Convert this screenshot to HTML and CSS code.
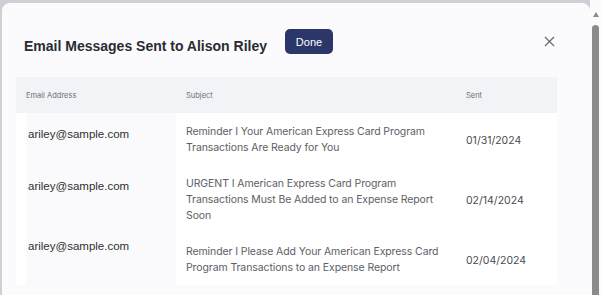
FILE: index.html
```html
<!DOCTYPE html>
<html lang="en">
<head>
  <meta charset="UTF-8">
  <title>Email Messages Sent</title>
  <meta name="viewport" content="width=device-width, initial-scale=1.0">
  <link rel="stylesheet" href="styles.css">
</head>
<body>
  <div class="page">
    <div class="modal">
      <div class="modal-header">
        <h2 class="modal-title">Email Messages Sent to Alison Riley</h2>
        <button class="done-button">Done</button>
        <button class="close-button" aria-label="Close">
          <svg width="11" height="11" viewBox="0 0 11 11">
            <path d="M1 1 L10 10 M10 1 L1 10" stroke="#676b7b" stroke-width="1.3" fill="none"/>
          </svg>
        </button>
      </div>
      <table class="messages">
        <thead>
          <tr>
            <th class="col-email">Email Address</th>
            <th class="col-subject">Subject</th>
            <th class="col-sent">Sent</th>
          </tr>
        </thead>
        <tbody>
          <tr>
            <td class="email">ariley@sample.com</td>
            <td class="subject">Reminder I Your American Express Card Program Transactions Are Ready for You</td>
            <td class="sent">01/31/2024</td>
          </tr>
          <tr>
            <td class="email">ariley@sample.com</td>
            <td class="subject">URGENT I American Express Card Program Transactions Must Be Added to an Expense Report Soon</td>
            <td class="sent">02/14/2024</td>
          </tr>
          <tr>
            <td class="email up">ariley@sample.com</td>
            <td class="subject">Reminder I Please Add Your American Express Card Program Transactions to an Expense Report</td>
            <td class="sent">02/04/2024</td>
          </tr>
        </tbody>
      </table>
    </div>
    <div class="scrollbar">
      <div class="scroll-arrow"></div>
      <div class="scroll-thumb"></div>
    </div>
  </div>
</body>
</html>
```

FILE: styles.css
```css
html, body {
  margin: 0;
  padding: 0;
  height: 100%;
  overflow: hidden;
}
body {
  background-color: #cdd0d6;
  font-family: "Liberation Sans", Arial, sans-serif;
  color: #333;
}
.page {
  display: flex;
  height: 100%;
}
.modal {
  flex: 1;
  margin: 3px 0 0 2px;
  background-color: #fbfbfd;
  border-radius: 8px 8px 0 0;
  padding: 0 32px 0 14px;
  overflow: hidden;
}
.modal-header {
  display: flex;
  align-items: center;
  height: 74px;
  box-sizing: border-box;
  padding: 4px 0 0 8px;
}
.modal-title {
  margin: 7px 0 0 0;
  font-size: 14px;
  font-weight: bold;
  color: #2a2b33;
}
.done-button {
  margin-left: 18px;
  margin-top: -1px;
  width: 48px;
  height: 25px;
  border: none;
  border-radius: 5px;
  background-color: #2b3768;
  color: #fff;
  font-family: "Liberation Sans", Arial, sans-serif;
  font-size: 11px;
  cursor: pointer;
}
.close-button {
  margin-left: auto;
  margin-right: 3px;
  margin-top: -1px;
  background: none;
  border: none;
  padding: 0;
  cursor: pointer;
  display: flex;
}
.messages {
  width: 541px;
  border-collapse: collapse;
  table-layout: fixed;
}
.messages th {
  height: 36px;
  background-color: #f2f3f6;
  font-family: Inter, sans-serif;
  font-size: 7.5px;
  font-weight: normal;
  color: #6d6e78;
  text-align: left;
  padding: 0 0 0 10px;
}
.col-email { width: 150px; }
.col-subject { width: 270px; }
.messages td {
  background-color: #fff;
  padding: 11px 0 9px 10px;
  vertical-align: middle;
}
.messages td.email {
  vertical-align: top;
  font-family: "Liberation Sans", Arial, sans-serif;
  font-size: 11.5px;
  color: #303030;
  line-height: 16px;
  padding-top: 13px;
  padding-left: 12px;
  background: linear-gradient(to right, #fff 10px, #fafafc 10px);
}
.messages td.email.up {
  padding-top: 5px;
}
.messages td.subject {
  font-family: Inter, sans-serif;
  font-size: 10.5px;
  letter-spacing: -0.1px;
  line-height: 16px;
  color: #5e5e66;
}
.messages td.sent {
  font-family: Inter, sans-serif;
  font-size: 10.5px;
  color: #4a4a52;
}
.scrollbar {
  width: 11px;
  background-color: #fbfbfd;
  display: flex;
  flex-direction: column;
  align-items: center;
}
.scroll-arrow {
  margin-top: 12px;
  width: 0;
  height: 0;
  border-left: 3px solid transparent;
  border-right: 3px solid transparent;
  border-bottom: 5px solid #8a8a8a;
}
.scroll-thumb {
  margin-top: 8px;
  width: 7px;
  flex: 1;
  background-color: #8b8b8b;
  border-radius: 4px 4px 0 0;
}
```
